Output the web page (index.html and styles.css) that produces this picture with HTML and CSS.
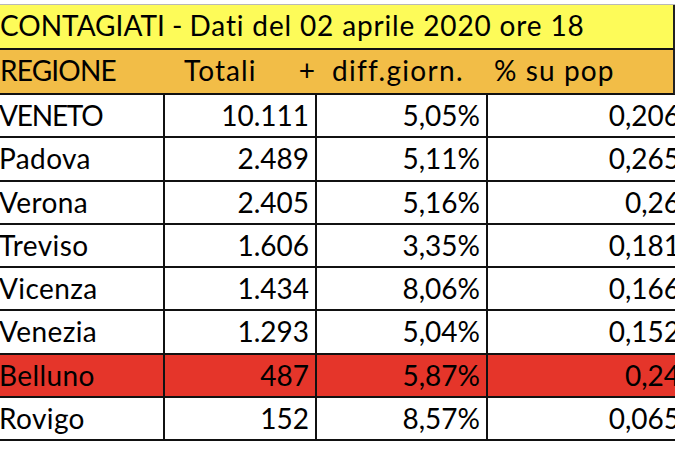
FILE: index.html
```html
<!DOCTYPE html>
<html lang="it">
<head>
<meta charset="utf-8">
<title>Contagiati Veneto</title>
<link rel="stylesheet" href="styles.css">
</head>
<body>
<div class="sheet">
  <div class="title">CONTAGIATI - <span class="lc">Dati del 02 aprile 2020 ore 18</span></div>
  <div class="head">
    <div class="hc c1">REGIONE</div>
    <div class="hc c2"><span>Totali</span><span class="plus">+</span></div>
    <div class="hc c3">diff.giorn.</div>
    <div class="hc c4">% su pop</div>
  </div>
  <div class="row"><div class="cell name caps">VENETO</div><div class="cell num">10.111</div><div class="cell num">5,05%</div><div class="cell num last">0,206</div></div>
  <div class="row"><div class="cell name">Padova</div><div class="cell num">2.489</div><div class="cell num">5,11%</div><div class="cell num last">0,265</div></div>
  <div class="row"><div class="cell name">Verona</div><div class="cell num">2.405</div><div class="cell num">5,16%</div><div class="cell num last">0,26</div></div>
  <div class="row"><div class="cell name">Treviso</div><div class="cell num">1.606</div><div class="cell num">3,35%</div><div class="cell num last">0,181</div></div>
  <div class="row"><div class="cell name">Vicenza</div><div class="cell num">1.434</div><div class="cell num">8,06%</div><div class="cell num last">0,166</div></div>
  <div class="row"><div class="cell name">Venezia</div><div class="cell num">1.293</div><div class="cell num">5,04%</div><div class="cell num last">0,152</div></div>
  <div class="row alert"><div class="cell name">Belluno</div><div class="cell num">487</div><div class="cell num">5,87%</div><div class="cell num last">0,24</div></div>
  <div class="row"><div class="cell name">Rovigo</div><div class="cell num">152</div><div class="cell num">8,57%</div><div class="cell num last">0,065</div></div>
</div>
</body>
</html>
```
FILE: styles.css
```css
html, body {
  margin: 0;
  padding: 0;
  background: #ffffff;
  overflow: hidden;
  width: 675px;
  height: 450px;
}

.sheet {
  margin-top: 4px;
  margin-left: -2px;
  width: 690px;
  font-family: Lato, "Open Sans", sans-serif;
  font-size: 28px;
  color: #000;
  border-top: 1px solid #b8b8b8;
}

.title {
  box-sizing: border-box;
  width: 677px;
  height: 45px;
  line-height: 41px;
  padding-left: 2px;
  background: #fdfb59;
  border-right: 2px solid #222;
  border-bottom: 2px solid #111;
  white-space: nowrap;
}

.title .lc {
  letter-spacing: 0.85px;
}

.head {
  display: grid;
  grid-template-columns: 167px 152px 171px 187px;
  box-sizing: border-box;
  width: 677px;
  height: 45px;
  line-height: 41px;
  background: #f2bd47;
  border-bottom: 2px solid #111;
  border-right: 2px solid #222;
}

.hc {
  white-space: nowrap;
}

.hc.c1 { padding-left: 2px; letter-spacing: -0.8px; }
.hc.c2 {
  display: flex;
  justify-content: space-between;
  padding-left: 19px;
  padding-right: 1px;
  letter-spacing: 1.1px;
}
.hc.c3 { padding-left: 15px; letter-spacing: 1.3px; }
.hc.c4 { padding-left: 6px; letter-spacing: 1.1px; }

.row {
  display: grid;
  grid-template-columns: 167px 152px 171px 200px;
  box-sizing: border-box;
  height: 43.25px;
  border-bottom: 2px solid #111;
  background: #ffffff;
}

.row.alert {
  background: #e5352a;
}

.cell {
  line-height: 41px;
  white-space: nowrap;
  box-sizing: border-box;
  border-right: 2px solid #111;
}

.cell.name {
  padding-left: 1px;
  letter-spacing: 0.4px;
}

.cell.name.caps {
  letter-spacing: -1.2px;
}

.cell.num {
  text-align: right;
  padding-right: 6px;
}

.cell.last {
  border-right: none;
  padding-right: 8px;
}
```
